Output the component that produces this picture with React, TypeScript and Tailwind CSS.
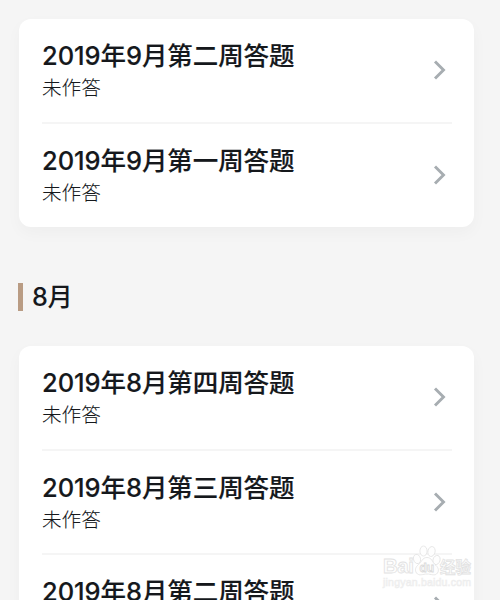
interface QuizRowProps {
  title: string;
  status: string;
}

const september = [
  { title: "2019年9月第二周答题", status: "未作答" },
  { title: "2019年9月第一周答题", status: "未作答" },
];

const august = [
  { title: "2019年8月第四周答题", status: "未作答" },
  { title: "2019年8月第三周答题", status: "未作答" },
  { title: "2019年8月第二周答题", status: "未作答" },
];

const ChevronIcon = () => (
  <svg width="14" height="20" viewBox="0 0 14 20" fill="none">
    <path d="M2 1.5L10.5 10L2 18.5" stroke="#a7adb1" strokeWidth="2.9" />
  </svg>
);

const QuizRow = ({ title, status }: QuizRowProps) => {
  return (
    <div className="flex h-[104.6px] items-start justify-between border-b-2 border-[#f5f5f5] last:h-[103.4px] last:border-transparent">
      <div className="pt-[21px]">
        <h4 className="h-8 text-[25.5px] leading-8 font-medium tracking-[-0.08px] whitespace-nowrap [-webkit-text-stroke:0.15px_#15181c]">
          {title}
        </h4>
        <p className="h-8 text-[19.6px] leading-8 font-light [-webkit-text-stroke:0.1px_#15181c]">
          {status}
        </p>
      </div>
      <span className="mt-[41px] mr-[5px]">
        <ChevronIcon />
      </span>
    </div>
  );
};

const QuizCard = ({ items }: { items: QuizRowProps[] }) => {
  return (
    <div className="mr-[26px] ml-[19px] rounded-[12px] bg-white pr-[22px] pl-[23px] shadow-[0_6px_16px_rgba(0,0,0,0.03)]">
      {items.map((item) => (
        <QuizRow key={item.title} title={item.title} status={item.status} />
      ))}
    </div>
  );
};

// paw + site name in the bottom corner
const Watermark = () => {
  return (
    <div className="absolute top-[545px] left-[381px]">
      <svg width="96" height="46" viewBox="0 0 96 46">
        <g fill="#fefefe" stroke="#e2e2e2" strokeWidth="0.8">
          <text x="2" y="28" fontFamily="Liberation Sans" fontWeight="bold" fontSize="20.5" textLength="31">
            Bai
          </text>
          <text x="59" y="28" fontFamily="Noto Sans CJK SC" fontWeight="bold" fontSize="15.5">
            经验
          </text>
          <ellipse cx="36" cy="14" rx="3.5" ry="4.7" transform="rotate(-15 36 14)" />
          <ellipse cx="42.5" cy="6" rx="3.6" ry="5" />
          <ellipse cx="50.5" cy="6.5" rx="3.6" ry="5" transform="rotate(12 50.5 6.5)" />
          <ellipse cx="55.5" cy="15" rx="3.5" ry="4.7" transform="rotate(18 55.5 15)" />
          <path d="M46 12.5C41 12.5 41 17 37.5 19.5C34.5 22 33.5 25 35.5 28C38 31.5 42 29 46 29C50 29 54 31.5 56.5 28C58.5 25 57 22 54 19.5C51 17 51 12.5 46 12.5Z" />
        </g>
        <text x="38.5" y="27" fontFamily="Liberation Sans" fontWeight="bold" fontSize="12" fill="#fdfdfd" stroke="#dadada" strokeWidth="0.8">
          du
        </text>
        <text x="2" y="41" fontFamily="Liberation Sans" fontSize="10.5" fill="#f9f9f9" stroke="#ededed" strokeWidth="0.6" textLength="88">
          jingyan.baidu.com
        </text>
      </svg>
    </div>
  );
};

export default function App() {
  return (
    <div className="relative h-[600px] w-[500px] overflow-hidden bg-[#f5f5f5] pt-[19px] font-['Inter','Noto_Sans_CJK_SC',sans-serif] text-[#15181c]">
      <QuizCard items={september} />
      <div className="flex h-[119px] items-center pt-[21px] pl-[18px]">
        <div className="h-[28px] w-[5px] bg-[#b99c84]" />
        <h3 className="ml-[9px] text-[25.2px] leading-8 font-medium tracking-[-0.3px]">8月</h3>
      </div>
      <QuizCard items={august} />
      <Watermark />
    </div>
  );
}
